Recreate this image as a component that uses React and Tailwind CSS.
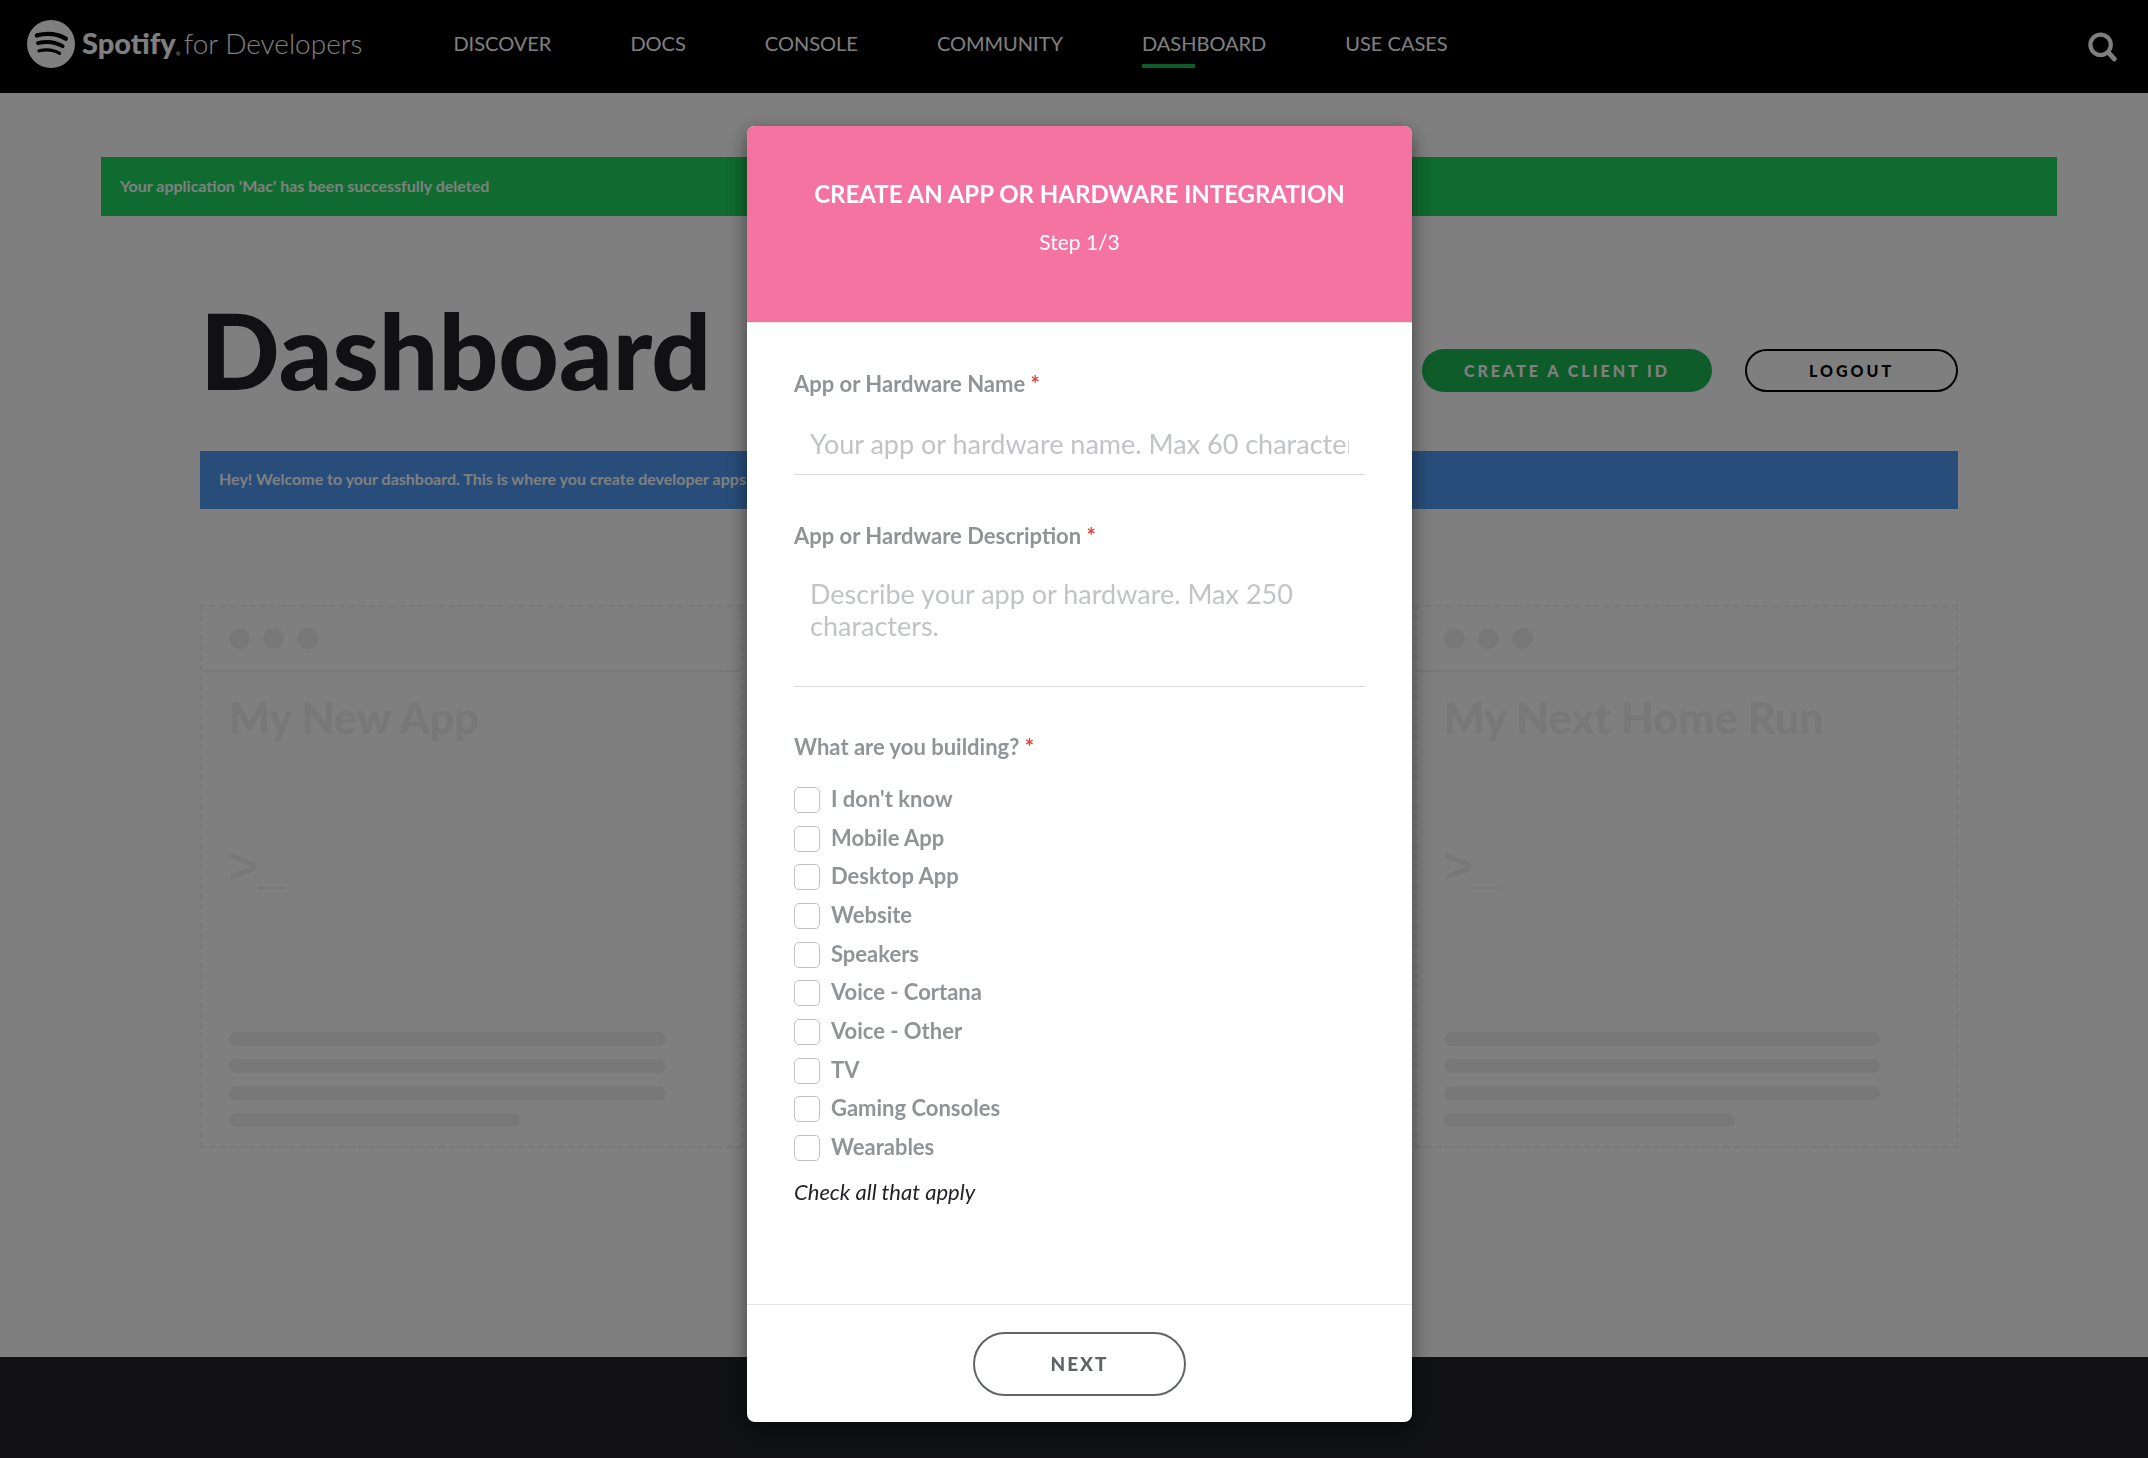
/**
 * App.jsx: developer dashboard with the "create an app" dialog open.
 */

import React, { useState } from 'react';

const NAV = ['Discover', 'Docs', 'Console', 'Community', 'Dashboard', 'Use Cases'];

const PLATFORMS = [
  "I don't know",
  'Mobile App',
  'Desktop App',
  'Website',
  'Speakers',
  'Voice - Cortana',
  'Voice - Other',
  'TV',
  'Gaming Consoles',
  'Wearables',
];

function Logo() {
  return (
    <a href="#home" className="flex items-center text-white">
      <svg viewBox="0 0 48 48" className="h-12 w-12" aria-hidden="true">
        <circle cx="24" cy="24" r="24" fill="currentColor" />
        <g fill="none" stroke="#000" strokeLinecap="round">
          <path d="M10 15.4c9.5-2.5 20.5-1.5 28.8 3.2" strokeWidth="4.4" />
          <path d="M11 23.2c8.3-2.2 17.4-1.1 24.6 3" strokeWidth="3.8" />
          <path d="M12 30.8c7.3-1.7 14.4-1 20.6 2.6" strokeWidth="3.1" />
        </g>
      </svg>
      <span className="ml-[7px] pb-[2px] text-[29px] leading-10 font-black">Spotify</span>
      <span className="mt-5 text-[6px] leading-none">®</span>
      <span className="ml-[3px] pb-[2px] text-[28px] leading-10 font-light">for Developers</span>
    </a>
  );
}

function Header() {
  return (
    <header className="flex h-[93px] items-start justify-between bg-black pt-5 pr-8 pl-[27px]">
      <div className="flex">
        <Logo />
        <nav className="ml-[91px] flex gap-[79px] pt-[9px]">
          {NAV.map(item => (
            <a key={item} href={`#${item}`} className="text-[20px] leading-7 text-white uppercase">
              {item}
              {item === 'Dashboard' && <span className="mt-[7px] block h-1 w-[53px] bg-[#1db954]" />}
            </a>
          ))}
        </nav>
      </div>
      <button type="button" aria-label="Search" className="mt-[13px] text-white">
        <svg viewBox="0 0 28 28" className="h-7 w-7 overflow-visible" fill="none" stroke="currentColor" aria-hidden="true">
          <circle cx="12.6" cy="11.8" r="10.2" strokeWidth="4.2" />
          <path d="M20.2 19.4l6.2 6.6" strokeWidth="4.8" strokeLinecap="round" />
        </svg>
      </button>
    </header>
  );
}

function EmptyCard({ title, className = '' }) {
  return (
    <article className={`border-2 border-dashed border-[#f0f0f0] text-[#f0f0f0] ${className}`}>
      <div className="flex h-[65px] items-center gap-[13px] border-b-2 border-[#f0f0f0] px-[27px]">
        <i className="h-[21px] w-[21px] rounded-full bg-[#f0f0f0]" />
        <i className="h-[21px] w-[21px] rounded-full bg-[#f0f0f0]" />
        <i className="h-[21px] w-[21px] rounded-full bg-[#f0f0f0]" />
      </div>
      <div className="px-[27px] pt-5 pb-[19px]">
        <h2 className="text-[43px] leading-[52px] font-black">{title}</h2>
        <div className="mt-[92px] font-['Liberation_Sans',sans-serif] text-[50px] leading-[60px] font-bold">&gt;_</div>
        <div className="mt-[136px] flex flex-col gap-[13px]">
          <i className="h-[14px] w-9/10 rounded-full bg-[#f0f0f0]" />
          <i className="h-[14px] w-9/10 rounded-full bg-[#f0f0f0]" />
          <i className="h-[14px] w-9/10 rounded-full bg-[#f0f0f0]" />
          <i className="h-[14px] w-3/5 rounded-full bg-[#f0f0f0]" />
        </div>
      </div>
    </article>
  );
}

function Required() {
  return <span className="text-[#d9443f]">*</span>;
}

function CreateAppDialog() {
  const [checked, setChecked] = useState([]);

  const toggle = name =>
    setChecked(prev => (prev.includes(name) ? prev.filter(n => n !== name) : [...prev, name]));

  return (
    <div className="fixed inset-0 flex items-start justify-center overflow-y-auto bg-black/50 pt-[126px] pl-[11px]">
      <form
        role="dialog"
        aria-labelledby="dialog-title"
        className="w-[665px] overflow-hidden rounded-lg bg-white shadow-[0_7px_20px_rgba(0,0,0,0.5)]"
      >
        <div className="border-b border-[#e5e5e5] bg-[#f573a0] pt-[52px] pb-[66px] text-center text-white">
          <h2 id="dialog-title" className="text-[24px] leading-8 font-bold">
            CREATE AN APP OR HARDWARE INTEGRATION
          </h2>
          <p className="mt-[18px] text-[21px] leading-7">Step 1/3</p>
        </div>

        <div className="px-[47px] pt-[47px] pb-[98px] text-[22px] leading-7">
          <label htmlFor="app-name" className="block font-bold text-[#919496]">
            App or Hardware Name <Required />
          </label>
          <input
            id="app-name"
            type="text"
            placeholder="Your app or hardware name. Max 60 characters"
            className="mt-[17px] block h-[60px] w-full border-b border-[#d9dadc] px-4 pb-[2px] text-[27px] outline-none placeholder:text-[#c1c3c6]"
          />

          <label htmlFor="app-description" className="mt-[47px] block font-bold text-[#919496]">
            App or Hardware Description <Required />
          </label>
          <textarea
            id="app-description"
            placeholder="Describe your app or hardware. Max 250 characters."
            className="mt-[17px] block h-[120px] w-full resize-none border-b border-[#d9dadc] px-4 pt-[11px] text-[27px] leading-8 outline-none placeholder:text-[#c1c3c6]"
          />

          <fieldset className="mt-[46px]">
            <legend className="font-bold text-[#919496]">
              What are you building? <Required />
            </legend>
            <div className="mt-[26px] flex h-[374px] flex-col items-start justify-between">
              {PLATFORMS.map(name => (
                <label key={name} className="flex items-start gap-[11px] leading-6 font-bold text-[#919496]">
                  <input
                    type="checkbox"
                    checked={checked.includes(name)}
                    onChange={() => toggle(name)}
                    className="h-[26px] w-[26px] appearance-none rounded-[5px] border border-[#c1c3c6] checked:bg-[#1db954]"
                  />
                  {name}
                </label>
              ))}
            </div>
          </fieldset>
          <p className="mt-[17px] text-[#222326] italic">Check all that apply</p>
        </div>

        <div className="flex justify-center border-t border-[#e5e5e5] pt-[27px] pb-[26px]">
          <button
            type="button"
            className="h-16 w-[213px] rounded-full border-2 border-[#616467] text-[19px] font-black tracking-[2px] text-[#616467]"
          >
            NEXT
          </button>
        </div>
      </form>
    </div>
  );
}

export default function App() {
  return (
    <div className="flex min-h-screen flex-col bg-white font-[Lato,'Liberation_Sans',sans-serif]">
      <Header />

      <main className="pt-16 pr-[91px] pb-[209px] pl-[101px]">
        <p className="bg-[#1ed760] px-[19px] pt-4 pb-[18px] text-[16px] leading-[25px] font-bold text-white">
          Your application 'Mac' has been successfully deleted
        </p>

        <div className="mt-[73px] px-[99px]">
          <div className="flex items-end justify-between">
            <h1 className="text-[105px] leading-[120px] font-black text-[#222326]">Dashboard</h1>
            <div className="mb-[17px] flex gap-[33px] text-[16px] font-black">
              <button type="button" className="h-[43px] w-[290px] rounded-full bg-[#1db954] tracking-[3px] text-white">
                CREATE A CLIENT ID
              </button>
              <button type="button" className="h-[43px] w-[213px] rounded-full border-2 border-black tracking-[3px] text-black">
                LOGOUT
              </button>
            </div>
          </div>

          <p className="mt-[42px] bg-[#509bf5] px-[19px] pt-4 pb-[18px] text-[16px] leading-6 font-bold text-white">
            Hey! Welcome to your dashboard. This is where you create developer apps
          </p>

          <div className="mt-24 grid grid-cols-3 gap-16">
            <EmptyCard title="My New App" />
            <EmptyCard title="My Next Home Run" className="col-start-3" />
          </div>
        </div>
      </main>

      <footer className="min-h-[101px] flex-1 bg-[#222326]" />

      <CreateAppDialog />
    </div>
  );
}
